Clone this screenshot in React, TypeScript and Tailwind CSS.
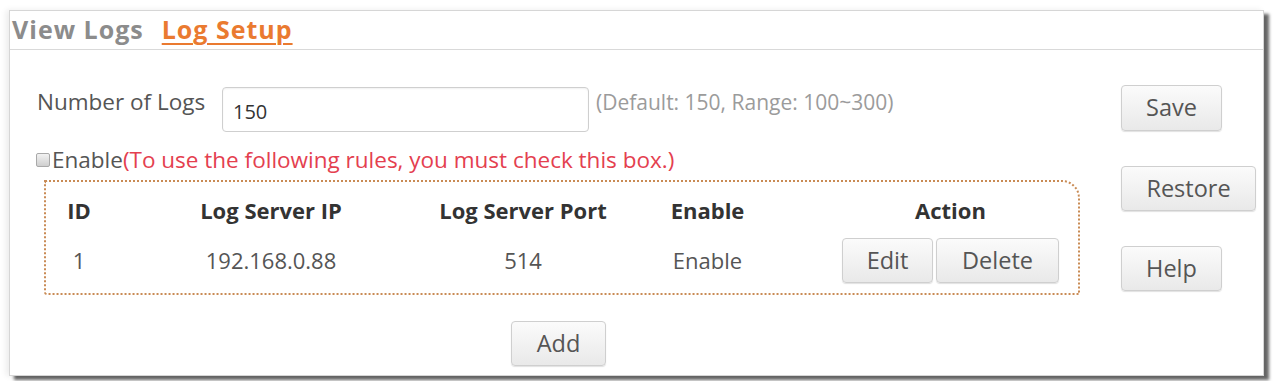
import React from "react";

const font = { fontFamily: '"Open Sans", "Liberation Sans", sans-serif' };

function Btn({ children, className = "" }: { children: React.ReactNode; className?: string }) {
  return (
    <button
      className={
        "flex items-center justify-center rounded-[4px] border border-[#cfcfcf] bg-gradient-to-b from-[#fbfbfb] to-[#e9e9e9] text-[23.5px] text-[#555] shadow-[0_1px_1px_rgba(0,0,0,0.12)] " +
        className
      }
    >
      {children}
    </button>
  );
}

export default function App() {
  return (
    <div className="h-[381px] w-[1273px] bg-white pl-[9px] pt-[10px]" style={font}>
      <div className="flex h-[366px] w-[1255px] flex-col border border-[#d6d6d6] bg-white shadow-[5px_4px_3px_rgba(0,0,0,0.6),-3px_0_6px_rgba(0,0,0,0.08)]">
        {/* tabs */}
        <div className="flex h-[39px] shrink-0 items-center gap-[18px] border-b border-[#d9d9d9] pl-[2px]">
          <span className="text-[25px] font-bold tracking-[1px] text-[#8c8c8c]">View Logs</span>
          <span className="text-[25px] font-bold tracking-[1px] text-[#ea7a30] underline decoration-[2px] underline-offset-[4px]">
            Log Setup
          </span>
        </div>
        {/* body */}
        <div className="flex flex-1">
          <div className="flex-1">
            <div className="flex items-start pl-[27px] pt-[37px]">
              <span className="w-[185px] text-[22.5px] leading-[30px] text-[#555]">Number of Logs</span>
              <div className="flex h-[45px] w-[367px] items-center rounded-[4px] border border-[#cfcfcf] pl-[10px] pt-[4px] text-[20px] text-[#333] shadow-[inset_0_1px_2px_rgba(0,0,0,0.06)]">
                150
              </div>
              <span className="ml-[7px] text-[21px] leading-[30px] text-[#9b9b9b]">
                (Default: 150, Range: 100~300)
              </span>
            </div>
            <div className="mt-[16px] flex h-[24px] items-center pl-[26px]">
              <span className="mr-[2px] inline-block h-[14px] w-[14px] rounded-[2px] border border-[#a9a9a9] bg-gradient-to-b from-[#f2f2f2] to-[#cfcfcf]" />
              <span className="text-[22.5px] text-[#555]">Enable</span>
              <span className="text-[22.5px] text-[#e4404f]">(To use the following rules, you must check this box.)</span>
            </div>
            <div className="ml-[34px] mt-[8px] w-[1036px] rounded-tr-[18px] rounded-bl-[3px] border-2 border-dotted border-[#c98b55] pb-[10px] pt-[10px]">
              <div className="grid h-[36px] grid-cols-[66px_318px_186px_183px_281px] items-center text-[22px] font-bold text-[#333]">
                <span className="text-center">ID</span>
                <span className="text-center">Log Server IP</span>
                <span className="text-center">Log Server Port</span>
                <span className="text-center">Enable</span>
                <span className="pl-[22px] text-center">Action</span>
              </div>
              <div className="mt-[10px] grid h-[45px] grid-cols-[66px_318px_186px_183px_281px] items-center text-[22px] text-[#555]">
                <span className="text-center">1</span>
                <span className="text-center">192.168.0.88</span>
                <span className="text-center">514</span>
                <span className="text-center">Enable</span>
                <div className="flex justify-center gap-[3px] pl-[22px]">
                  <Btn className="h-[45px] w-[91px]">Edit</Btn>
                  <Btn className="h-[45px] w-[123px]">Delete</Btn>
                </div>
              </div>
            </div>
            <div className="ml-[501px] mt-[26px]">
              <Btn className="h-[45px] w-[95px]">Add</Btn>
            </div>
          </div>
          <div className="flex w-[142px] shrink-0 flex-col gap-[35px] pt-[35px]">
            <Btn className="h-[46px] w-[101px]">Save</Btn>
            <Btn className="h-[45px] w-[135px]">Restore</Btn>
            <Btn className="h-[45px] w-[101px]">Help</Btn>
          </div>
        </div>
      </div>
    </div>
  );
}
